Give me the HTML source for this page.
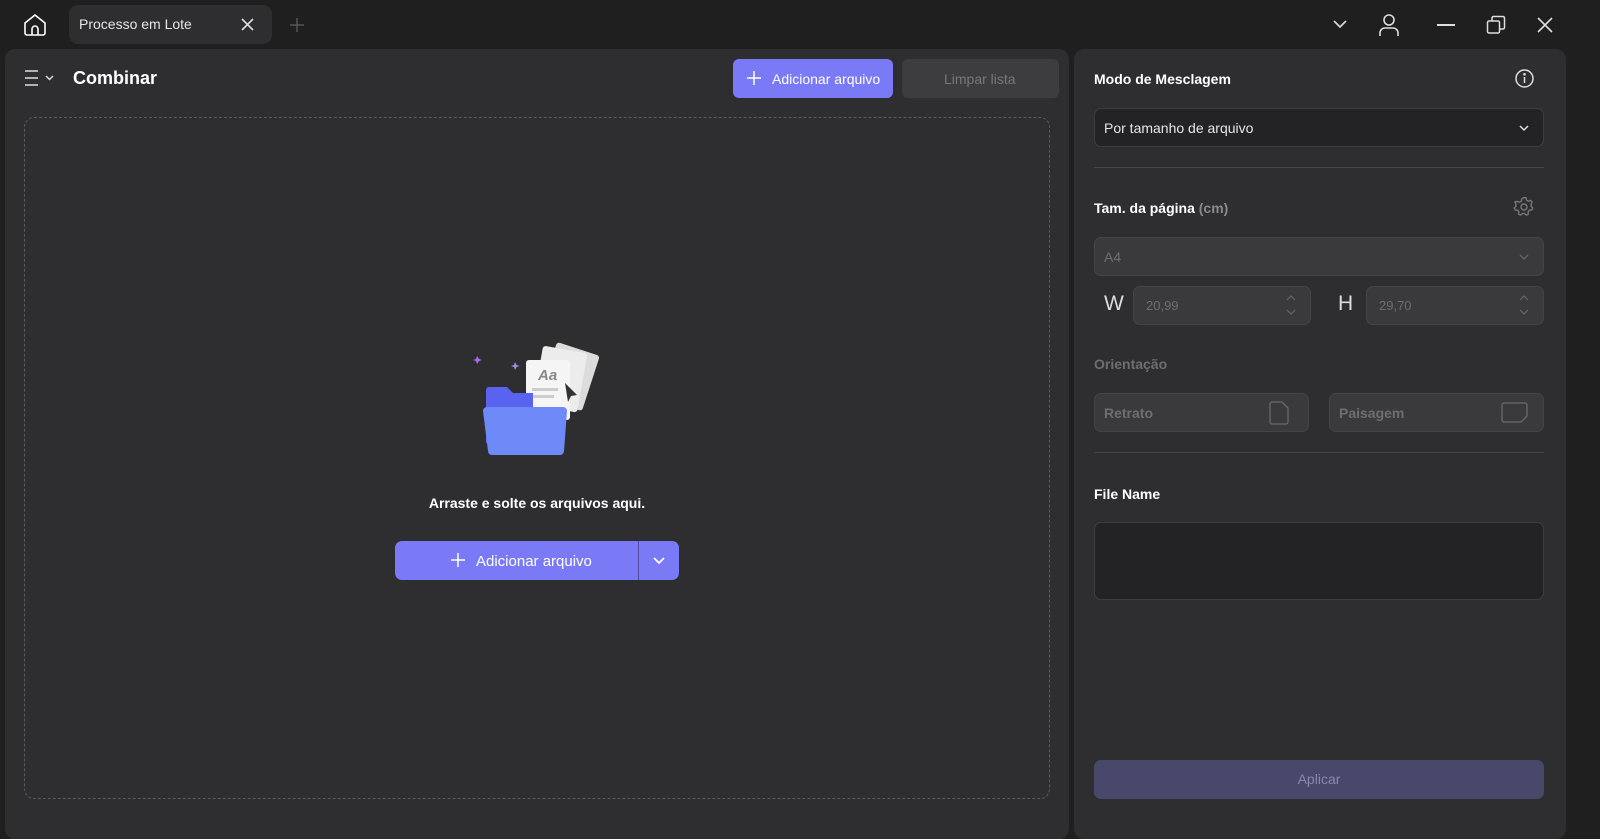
<!DOCTYPE html>
<html><head><meta charset="utf-8"><style>
*{box-sizing:border-box;margin:0;padding:0}
body{width:1600px;height:826px;background:#1f1f20;font-family:"Liberation Sans",sans-serif;color:#fff;position:relative;overflow:hidden}
.a{position:absolute}
.panel{background:#2e2e30;border-radius:10px}
.t{font-size:14px}
.b{font-weight:bold}
.field{border:1px solid #444;border-radius:7px;background:#3a3a3c}
.g{color:#6e6e72}
</style></head><body>
<!-- top bar -->
<svg class="a" style="left:22px;top:12px" width="26" height="26" viewBox="0 0 26 26" fill="none" stroke="#fff" stroke-width="1.6"><path d="M3 11 L13 3 L23 11 V21 a2 2 0 0 1 -2 2 H5 a2 2 0 0 1 -2 -2 Z"/><path d="M10 23 V17 a3 3 0 0 1 6 0 V23"/></svg>
<div class="a" style="left:69px;top:5px;width:203px;height:39px;background:#2e2e30;border-radius:9px"></div>
<div class="a t" style="left:79px;top:16px;color:#e6e6e6">Processo em Lote</div>
<svg class="a" style="left:240px;top:17px" width="15" height="15" stroke="#ddd" stroke-width="1.6"><path d="M2 2L13 13M13 2L2 13"/></svg>
<svg class="a" style="left:289px;top:17px" width="16" height="16" stroke="#555" stroke-width="1.5"><path d="M8 1V15M1 8H15"/></svg>
<svg class="a" style="left:1332px;top:19px" width="16" height="10" stroke="#ddd" stroke-width="1.6" fill="none"><path d="M2 2L8 8L14 2"/></svg>
<svg class="a" style="left:1378px;top:13px" width="22" height="24" stroke="#ddd" stroke-width="1.6" fill="none"><circle cx="11" cy="7" r="5"/><path d="M2 23V20a5 5 0 0 1 5-5h8a5 5 0 0 1 5 5V23"/></svg>
<div class="a" style="left:1437px;top:24px;width:18px;height:1.6px;background:#ddd"></div>
<svg class="a" style="left:1486px;top:15px" width="20" height="20" stroke="#ddd" stroke-width="1.5" fill="none"><rect x="1.5" y="6" width="12" height="12" rx="1.5"/><path d="M6 6V3a1.5 1.5 0 0 1 1.5-1.5H17a1.5 1.5 0 0 1 1.5 1.5V12.5a1.5 1.5 0 0 1-1.5 1.5H13.5"/></svg>
<svg class="a" style="left:1537px;top:17px" width="16" height="16" stroke="#ddd" stroke-width="1.6"><path d="M1 1L15 15M15 1L1 15"/></svg>

<!-- left panel -->
<div class="a panel" style="left:5px;top:49px;width:1064px;height:790px"></div>
<svg class="a" style="left:24px;top:69px" width="34" height="18" stroke="#ddd" stroke-width="1.5" fill="none"><path d="M1 2H14M1 9H14M1 16H14"/><path d="M22 7l3.5 3.5L29 7"/></svg>
<div class="a b" style="left:73px;top:68px;font-size:18px">Combinar</div>
<div class="a" style="left:733px;top:59px;width:160px;height:39px;background:#7a7af7;border-radius:6px"></div>
<svg class="a" style="left:747px;top:71px" width="14" height="14" stroke="#fff" stroke-width="1.5"><path d="M7 0V14M0 7H14"/></svg>
<div class="a t" style="left:772px;top:71px">Adicionar arquivo</div>
<div class="a" style="left:902px;top:59px;width:157px;height:39px;background:#3d3d3f;border-radius:6px"></div>
<div class="a t" style="left:944px;top:71px;color:#777">Limpar lista</div>
<div class="a" style="left:24px;top:117px;width:1026px;height:682px;border:1.5px dashed #5a5a5c;border-radius:10px"></div>

<!-- illustration -->
<svg class="a" style="left:470px;top:338px" width="140" height="125" viewBox="0 0 140 125">
<path d="M7 18l2 3 3 1-3 1-2 3-1-3-3-1 3-1z" fill="#b468f0"/>
<path d="M45 24l1.5 3 3 1-3 1-1.5 3-1-3-3-1 3-1z" fill="#a88af5"/>
<g transform="rotate(18 100 45)"><rect x="75" y="10" width="45" height="58" rx="3" fill="#dcdcdc"/></g>
<g transform="rotate(10 95 45)"><rect x="67" y="12" width="45" height="60" rx="3" fill="#ececec"/></g>
<rect x="56" y="22" width="44" height="60" rx="3" fill="#f5f5f5"/>
<text x="68" y="42" font-size="15" font-style="italic" font-weight="bold" fill="#888" font-family="Liberation Sans">Aa</text>
<rect x="62" y="50" width="26" height="3" fill="#ccc"/><rect x="62" y="57" width="22" height="3" fill="#ccc"/>
<path d="M95 45l12 12-6 1-3 6z" fill="#333"/>
<path d="M16 52a3 3 0 0 1 3-3h18l6 6h20v50H16z" fill="#5a62f0"/>
<path d="M13 73a4 4 0 0 1 4-4h76a4 4 0 0 1 4 4l-3 40a4 4 0 0 1-4 4H22a4 4 0 0 1-4-4z" fill="#6d8af8"/>
</svg>
<div class="a b" style="left:0;width:1074px;top:495px;text-align:center;font-size:14px">Arraste e solte os arquivos aqui.</div>
<div class="a" style="left:395px;top:541px;width:284px;height:39px;background:#7a7af7;border-radius:7px"></div>
<div class="a" style="left:638px;top:541px;width:1px;height:39px;background:#4d4da0"></div>
<svg class="a" style="left:451px;top:553px" width="14" height="14" stroke="#fff" stroke-width="1.5"><path d="M7 0V14M0 7H14"/></svg>
<div class="a t" style="left:476px;top:553px;font-size:15px">Adicionar arquivo</div>
<svg class="a" style="left:652px;top:556px" width="14" height="9" stroke="#fff" stroke-width="1.7" fill="none"><path d="M2 2L7 7L12 2"/></svg>

<!-- right panel -->
<div class="a panel" style="left:1074px;top:49px;width:492px;height:790px"></div>
<div class="a b t" style="left:1094px;top:71px">Modo de Mesclagem</div>
<svg class="a" style="left:1514px;top:68px" width="21" height="21" fill="none" stroke="#ddd" stroke-width="1.5"><circle cx="10.5" cy="10.5" r="8.5"/><path d="M10.5 9V15"/><circle cx="10.5" cy="6.3" r="0.6" fill="#ddd"/></svg>
<div class="a" style="left:1094px;top:108px;width:450px;height:39px;background:#232325;border:1px solid #3d3d3f;border-radius:7px"></div>
<div class="a t" style="left:1104px;top:120px;color:#e6e6e6">Por tamanho de arquivo</div>
<svg class="a" style="left:1518px;top:124px" width="12" height="8" stroke="#ddd" stroke-width="1.5" fill="none"><path d="M2 2L6 6L10 2"/></svg>
<div class="a" style="left:1094px;top:167px;width:450px;height:1px;background:#454547"></div>
<div class="a b t" style="left:1094px;top:200px">Tam. da página <span style="color:#8a8a8e">(cm)</span></div>
<svg class="a" style="left:1512px;top:195px" width="24" height="24" viewBox="0 0 24 24" fill="none" stroke="#777" stroke-width="1.4"><path d="M12 2.5l2 .3.6 2.4 1.8 1 2.3-.8 1.4 1.6-1 2.2v2l1.6 1.8-.9 2-2.4.2-1.3 1.6.2 2.4-1.9.9-1.9-1.5h-2l-1.9 1.5-1.9-.9.2-2.4-1.3-1.6-2.4-.2-.9-2 1.6-1.8v-2l-1-2.2L5.2 6.4l2.3.8 1.8-1 .6-2.4z"/><circle cx="12" cy="12" r="3"/></svg>
<div class="a field" style="left:1094px;top:237px;width:450px;height:39px"></div>
<div class="a t g" style="left:1104px;top:249px">A4</div>
<svg class="a" style="left:1518px;top:253px" width="12" height="8" stroke="#666" stroke-width="1.3" fill="none"><path d="M2 2L6 6L10 2"/></svg>
<div class="a" style="left:1104px;top:292px;font-size:21px;color:#ddd">W</div>
<div class="a field" style="left:1133px;top:286px;width:178px;height:39px"></div>
<div class="a g" style="left:1146px;top:298px;font-size:13px">20,99</div>
<svg class="a" style="left:1285px;top:294px" width="12" height="22" stroke="#666" stroke-width="1.2" fill="none"><path d="M2 6L6 2L10 6M2 16L6 20L10 16"/></svg>
<div class="a" style="left:1338px;top:292px;font-size:21px;color:#ddd">H</div>
<div class="a field" style="left:1366px;top:286px;width:178px;height:39px"></div>
<div class="a g" style="left:1379px;top:298px;font-size:13px">29,70</div>
<svg class="a" style="left:1518px;top:294px" width="12" height="22" stroke="#666" stroke-width="1.2" fill="none"><path d="M2 6L6 2L10 6M2 16L6 20L10 16"/></svg>
<div class="a b t g" style="left:1094px;top:356px">Orientação</div>
<div class="a field" style="left:1094px;top:393px;width:215px;height:39px"></div>
<div class="a b t g" style="left:1104px;top:405px">Retrato</div>
<svg class="a" style="left:1268px;top:401px" width="22" height="24" fill="none" stroke="#6a6a6e" stroke-width="1.3"><path d="M2 3a2 2 0 0 1 2-2h10l6 6v14a2 2 0 0 1-2 2H4a2 2 0 0 1-2-2z"/></svg>
<div class="a field" style="left:1329px;top:393px;width:215px;height:39px"></div>
<div class="a b t g" style="left:1339px;top:405px">Paisagem</div>
<svg class="a" style="left:1501px;top:402px" width="28" height="22" fill="none" stroke="#6a6a6e" stroke-width="1.3"><path d="M3 1h21a2 2 0 0 1 2 2v11l-6 6H3a2 2 0 0 1-2-2V3a2 2 0 0 1 2-2z"/></svg>
<div class="a" style="left:1094px;top:452px;width:450px;height:1px;background:#454547"></div>
<div class="a b t" style="left:1094px;top:486px">File Name</div>
<div class="a" style="left:1094px;top:522px;width:450px;height:78px;background:#232325;border:1px solid #3d3d3f;border-radius:7px"></div>
<div class="a" style="left:1094px;top:760px;width:450px;height:39px;background:#48486a;border-radius:7px"></div>
<div class="a" style="left:1094px;top:771px;width:450px;text-align:center;font-size:14px;color:#8888a8">Aplicar</div>
</body></html>
